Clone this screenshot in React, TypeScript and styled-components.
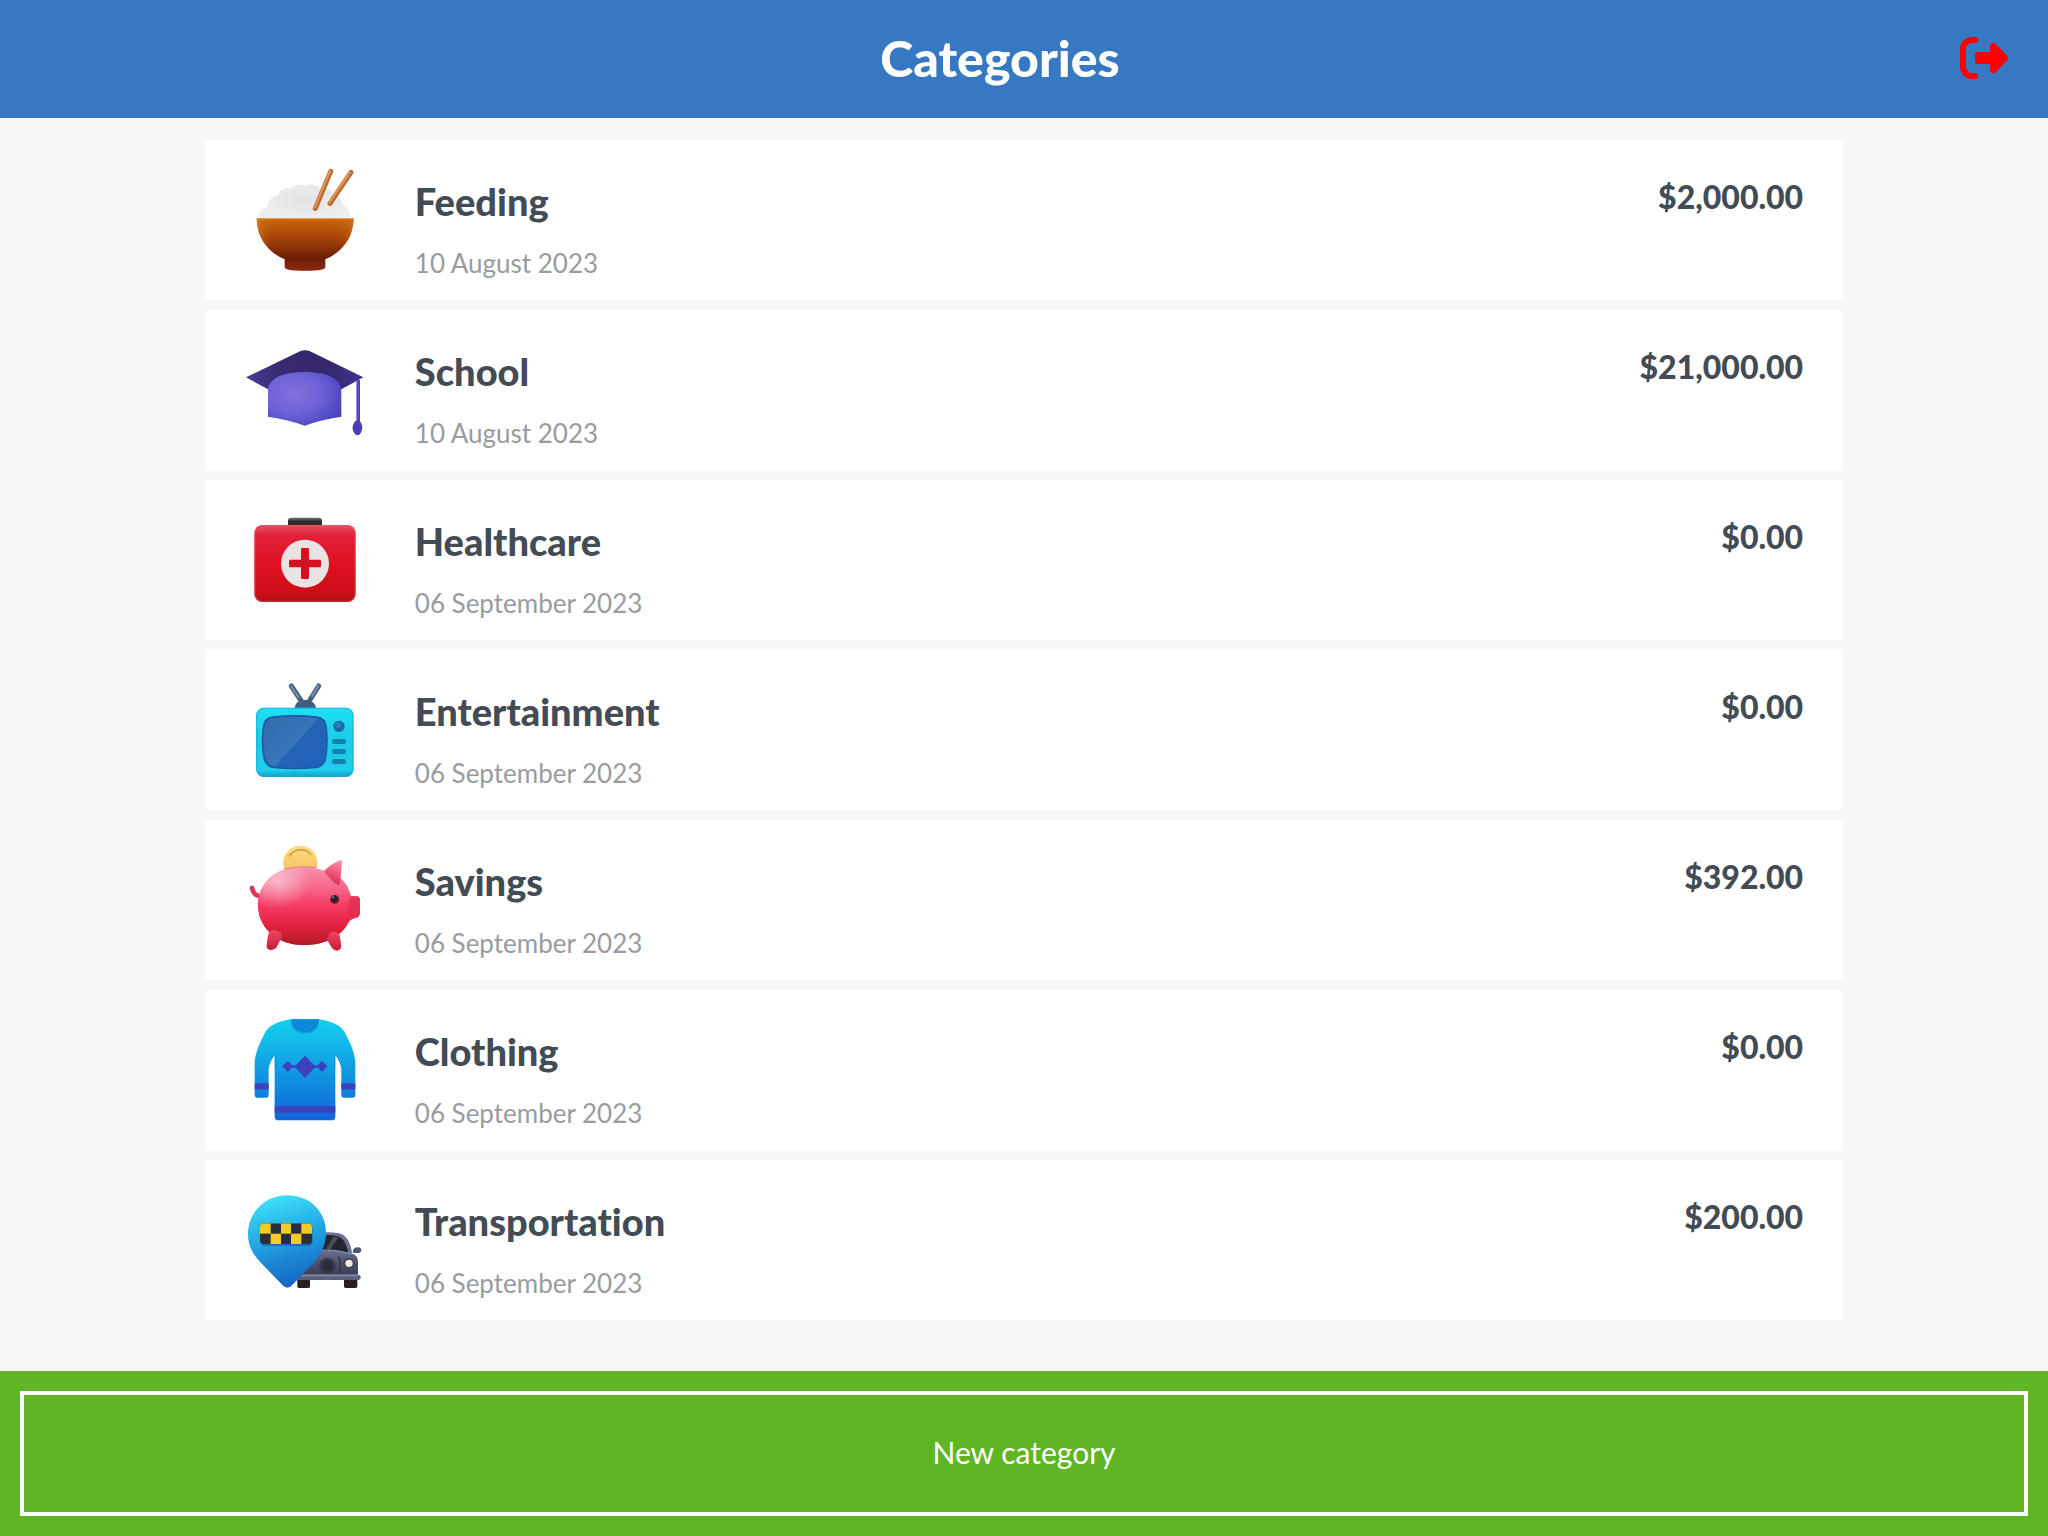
import React from "react";
import styled, { createGlobalStyle } from "styled-components";

const GlobalStyle = createGlobalStyle`
  *, *::before, *::after { box-sizing: border-box; }
  body {
    margin: 0;
    background: #f7f7f7;
    color: #434b54;
    font-family: Lato, "Open Sans", "Liberation Sans", sans-serif;
    font-variant-ligatures: none;
  }
`;

const Page = styled.div`
  display: flex;
  flex-direction: column;
  min-height: 100vh;
`;

const Header = styled.header`
  display: flex;
  align-items: center;
  padding: 29px 40px 31px;
  background: #3778c2;
`;

const Title = styled.h1`
  flex: 1;
  margin: 0;
  color: #fff;
  font-size: 50px;
  font-weight: 900;
  line-height: 58px;
  text-align: center;
`;

const LogoutButton = styled.button`
  display: flex;
  padding: 0;
  border: 0;
  background: none;
  color: #f00;
  cursor: pointer;
`;

const List = styled.ul`
  flex: 1;
  display: flex;
  flex-direction: column;
  gap: 10px;
  width: 80%;
  margin: 0 auto;
  padding: 22px 0 40px;
  list-style: none;
`;

const Card = styled.li`
  display: flex;
  gap: 50px;
  padding: 20px 40px;
  background: #fff;
`;

const Picture = styled.svg`
  display: block;
  flex: none;
  width: 120px;
  height: 120px;
`;

const Details = styled.div`
  flex: 1;
  display: flex;
  flex-direction: column;
  gap: 23px;
  padding-top: 18px;
`;

const Name = styled.h2`
  margin: 0;
  font-size: 38px;
  font-weight: 900;
  line-height: 46px;
`;

const CreatedAt = styled.time`
  color: #999b9e;
  font-size: 26px;
  line-height: 32px;
`;

const Amount = styled.p`
  margin: 0;
  padding-top: 18px;
  font-size: 32px;
  font-weight: 900;
  line-height: 38px;
`;

const Footer = styled.footer`
  padding: 20px;
  background: #5fb523;
`;

const NewCategoryButton = styled.button`
  display: block;
  width: 100%;
  padding: 39px 40px 41px;
  border: 4px solid #fff;
  border-radius: 0;
  background: none;
  color: #fff;
  font-family: inherit;
  font-size: 30px;
  line-height: 37px;
  cursor: pointer;
`;

const LogoutIcon = () => (
  <svg width="48" height="44" viewBox="0 0 48 44" aria-hidden="true">
    <path
      d="M15 4H12a9 9 0 0 0-9 9v18a9 9 0 0 0 9 9h3"
      fill="none"
      stroke="currentColor"
      strokeWidth="6"
      strokeLinecap="round"
    />
    <path
      d="M18 16H30V10.500C30 7 33 5.500 35.500 7.800L47 19.500C48.300 21 48.300 23 47 24.500L35.500 36.200C33 38.500 30 37 30 33.500V28H18C16 28 15 27 15 25V19C15 17 16 16 18 16Z"
      fill="currentColor"
    />
  </svg>
);

const RiceBowl = () => (
  <Picture viewBox="135 90 360 360" aria-hidden="true">
    <defs>
      <linearGradient id="bowl" x1="0" y1="0" x2="0" y2="1">
        <stop offset="0" stopColor="#c8690f" />
        <stop offset=".35" stopColor="#a84608" />
        <stop offset=".78" stopColor="#6b1c08" />
        <stop offset="1" stopColor="#8e2a0d" />
      </linearGradient>
      <linearGradient id="bowlSide">
        <stop offset="0" stopColor="#f08a2a" stopOpacity=".5" />
        <stop offset=".15" stopColor="#c8690f" stopOpacity="0" />
        <stop offset=".85" stopColor="#c8690f" stopOpacity="0" />
        <stop offset="1" stopColor="#e07820" stopOpacity=".4" />
      </linearGradient>
      <radialGradient id="rice" cx=".5" cy=".45" r=".6">
        <stop offset="0" stopColor="#e3e3e6" />
        <stop offset="1" stopColor="#efeff0" />
      </radialGradient>
    </defs>
    <path
      d="M176 266C176 244 188 232 203 232C203 212 216 198 234 198C238 180 254 172 272 176C284 164 302 160 316 166C332 158 350 164 358 174C378 166 396 178 398 196C416 196 426 208 426 222C442 228 452 246 452 266Z"
      fill="url(#rice)"
    />
    <g strokeLinecap="round" strokeWidth="15">
      <path d="M392 124L346 235" stroke="#bd6a30" />
      <path d="M453 127L390 220" stroke="#bd6a30" />
      <path d="M390 123L344 233" stroke="#e0985a" strokeWidth="6" />
      <path d="M450 127L388 217" stroke="#e0985a" strokeWidth="6" />
    </g>
    <path
      d="M170 264H461C461 322 428 366 376 388V410C376 418 362 422 315 422C268 422 254 418 254 410V388C202 366 170 322 170 264Z"
      fill="url(#bowl)"
    />
    <path
      d="M170 264H461C461 322 428 366 376 388H254C202 366 170 322 170 264Z"
      fill="url(#bowlSide)"
    />
    <path d="M171 266H460" stroke="#e59a4c" strokeWidth="4" />
  </Picture>
);

const GraduationCap = () => (
  <Picture viewBox="135 60 360 360" aria-hidden="true">
    <defs>
      <radialGradient id="capBase" cx=".35" cy=".4" r=".75">
        <stop offset="0" stopColor="#8370da" />
        <stop offset=".5" stopColor="#6c62d8" />
        <stop offset="1" stopColor="#4740ba" />
      </radialGradient>
      <linearGradient id="capTop">
        <stop offset="0" stopColor="#4a3a96" />
        <stop offset=".3" stopColor="#382970" />
        <stop offset=".7" stopColor="#352769" />
        <stop offset="1" stopColor="#44339a" />
      </linearGradient>
    </defs>
    <path
      d="M138 202L300 124Q315 117 330 124L490 202L424 238H204Z"
      fill="url(#capTop)"
    />
    <path
      d="M204 240C206 205 250 186 314 186C378 186 422 205 424 240V320Q360 330 314 347Q268 330 204 320Z"
      fill="url(#capBase)"
    />
    <path d="M474 210V340" stroke="#5b4cc4" strokeWidth="10" />
    <path d="M478 210V340" stroke="#3d33a0" strokeWidth="3" />
    <path
      d="M467 332H479C488 344 490 358 480 372Q472 380 465 372C454 358 456 344 467 332Z"
      fill="#4a3fb6"
    />
  </Picture>
);

const FirstAidKit = () => (
  <Picture viewBox="135 60 360 360" aria-hidden="true">
    <defs>
      <linearGradient id="kit" x1="0" y1="0" x2="0" y2="1">
        <stop offset="0" stopColor="#ea5064" />
        <stop offset=".13" stopColor="#e3213a" />
        <stop offset=".55" stopColor="#dc1020" />
        <stop offset=".85" stopColor="#d00e18" />
        <stop offset="1" stopColor="#b01218" />
      </linearGradient>
      <linearGradient id="handle" x1="0" y1="0" x2="0" y2="1">
        <stop offset="0" stopColor="#747678" />
        <stop offset=".5" stopColor="#2c2c2e" />
        <stop offset="1" stopColor="#3e2628" />
      </linearGradient>
    </defs>
    <path d="M264 136V122Q264 113 274 113H356Q366 113 366 122V136Z" fill="url(#handle)" />
    <rect x="163" y="135" width="304" height="231" rx="24" fill="url(#kit)" />
    <rect x="165" y="137" width="300" height="227" rx="22" fill="none" stroke="#f0626c" strokeOpacity=".35" strokeWidth="4" />
    <circle cx="315" cy="251" r="72" fill="#e9e3e2" />
    <path
      d="M307 204H323Q327 204 327 208V239H359Q363 239 363 243V258Q363 262 359 262H327V293Q327 297 323 297H307Q303 297 303 293V262H271Q267 262 267 258V243Q267 239 271 239H303V208Q303 204 307 204Z"
      fill="#d4121f"
    />
  </Picture>
);

const Television = () => (
  <Picture viewBox="135 60 360 360" aria-hidden="true">
    <defs>
      <linearGradient id="tvBody" x1="0" y1="0" x2="0" y2="1">
        <stop offset="0" stopColor="#20dff2" />
        <stop offset=".5" stopColor="#1ccbe8" />
        <stop offset=".9" stopColor="#1fcdec" />
        <stop offset="1" stopColor="#169bc6" />
      </linearGradient>
      <linearGradient id="tvScreen" x1="0" y1="0" x2="1" y2="1">
        <stop offset="0" stopColor="#2c66a8" />
        <stop offset="1" stopColor="#1d62bd" />
      </linearGradient>
      <linearGradient id="tvGlare" x1="0" y1="0" x2="1" y2="1">
        <stop offset="0" stopColor="#4a86be" stopOpacity=".2" />
        <stop offset="1" stopColor="#6a9cca" stopOpacity=".5" />
      </linearGradient>
    </defs>
    <g strokeLinecap="round" strokeWidth="15" stroke="#47617f">
      <path d="M274 108L306 156" />
      <path d="M356 108L326 156" />
    </g>
    <g strokeLinecap="round" strokeWidth="5" stroke="#7d93ae">
      <path d="M273 108L296 142" />
      <path d="M355 108L336 138" />
    </g>
    <path d="M284 174C286 156 300 150 316 150C332 150 346 158 348 174Z" fill="#3f5c82" />
    <rect x="168" y="173" width="293" height="208" rx="24" fill="url(#tvBody)" />
    <rect x="170" y="175" width="289" height="204" rx="22" fill="none" stroke="#1aaed8" strokeOpacity=".6" strokeWidth="4" />
    <path
      d="M218 201Q284 193 350 201Q376 204 379 232Q384 276 378 320Q374 350 346 353Q284 358 222 353Q196 350 191 320Q184 276 190 232Q193 204 218 201Z"
      fill="url(#tvScreen)"
      stroke="#1b58a4"
      strokeWidth="4"
    />
    <path
      d="M220 205Q284 198 346 205L352 208L226 348Q202 346 196 320Q188 276 194 234Q198 208 220 205Z"
      fill="url(#tvGlare)"
    />
    <circle cx="417" cy="229" r="17" fill="#1b6a9e" />
    <circle cx="414" cy="225" r="9" fill="#2a83b4" />
    <g fill="#1681ab">
      <rect x="396" y="267" width="42" height="15" rx="7" />
      <rect x="396" y="297" width="42" height="15" rx="7" />
      <rect x="396" y="327" width="42" height="15" rx="7" />
    </g>
  </Picture>
);

const PiggyBank = () => (
  <Picture viewBox="135 60 360 360" aria-hidden="true">
    <defs>
      <linearGradient id="pig" x1="0" y1="0" x2="0" y2="1">
        <stop offset="0" stopColor="#f990aa" />
        <stop offset=".22" stopColor="#f76f92" />
        <stop offset=".5" stopColor="#f43a62" />
        <stop offset=".75" stopColor="#e3213f" />
        <stop offset="1" stopColor="#b01a28" />
      </linearGradient>
      <radialGradient id="pigShine" cx=".22" cy=".18" r=".35">
        <stop offset="0" stopColor="#fff" stopOpacity=".5" />
        <stop offset="1" stopColor="#fff" stopOpacity="0" />
      </radialGradient>
      <linearGradient id="pigLeg" x1="0" y1="0" x2="0" y2="1">
        <stop offset="0" stopColor="#ee4663" />
        <stop offset="1" stopColor="#c3203a" />
      </linearGradient>
      <linearGradient id="pigEar" x1=".7" y1="0" x2=".4" y2="1">
        <stop offset="0" stopColor="#f890a6" />
        <stop offset=".5" stopColor="#f0567a" />
        <stop offset="1" stopColor="#d42c50" />
      </linearGradient>
      <linearGradient id="coin" x1="0" y1="0" x2="0" y2="1">
        <stop offset="0" stopColor="#fbdc7c" />
        <stop offset="1" stopColor="#f5bc5c" />
      </linearGradient>
    </defs>
    <circle cx="301" cy="128" r="51" fill="url(#coin)" />
    <path d="M268 108Q282 89 304 89Q322 90 332 104" fill="none" stroke="#c4913e" strokeWidth="4" strokeLinecap="round" />
    <path d="M156 204C160 220 166 228 180 228" fill="none" stroke="#dc3455" strokeWidth="14" strokeLinecap="round" />
    <path
      id="pigBody"
      d="M174 254C174 194 224 143 290 143C330 141 356 146 380 156L425 178C440 194 448 210 452 228H468Q480 228 480 242V276Q480 292 466 294C456 296 450 300 446 306C424 350 376 375 312 375C228 375 174 320 174 254Z"
      fill="url(#pig)"
    />
    <use href="#pigBody" style={{ fill: "none" }} />
    <path
      d="M174 254C174 194 224 143 290 143C330 141 356 146 380 156L425 178L446 306C424 350 376 375 312 375C228 375 174 320 174 254Z"
      fill="url(#pigShine)"
    />
    <path d="M254 147Q300 137 350 143" fill="none" stroke="#ec8094" strokeWidth="4" />
    <path d="M450 230H468Q480 230 480 242V276Q480 290 464 294Q450 297 448 290C444 274 444 250 450 230Z" fill="#e02f4f" fillOpacity=".8" />
    <path d="M372 154Q392 132 420 121Q427 121 426 130L420 190Q419 198 412 194Q396 186 372 154Z" fill="url(#pigEar)" />
    <path d="M204 346Q208 330 224 331Q246 334 246 350L230 382Q222 392 208 389Q198 386 200 374Z" fill="url(#pigLeg)" />
    <path d="M384 350Q388 334 404 335Q420 338 420 352L424 378Q422 392 410 392Q400 390 396 384L380 358Z" fill="url(#pigLeg)" />
    <circle cx="404" cy="238" r="13" fill="#5c1a2c" />
    <circle cx="403" cy="236" r="9" fill="#20222a" />
    <circle cx="399" cy="232" r="3" fill="#8a8f98" />
  </Picture>
);

const Sweater = () => (
  <Picture viewBox="135 60 360 360" aria-hidden="true">
    <defs>
      <linearGradient id="sweater" x1="0" y1="88" x2="0" y2="392" gradientUnits="userSpaceOnUse">
        <stop offset="0" stopColor="#12d0ee" />
        <stop offset=".3" stopColor="#12b2e8" />
        <stop offset=".65" stopColor="#0f8ade" />
        <stop offset="1" stopColor="#1262d8" />
      </linearGradient>
    </defs>
    <path
      d="M274 88H356C392 92 424 108 434 126C450 158 462 182 466 212V314Q466 323 458 323H432Q424 323 424 314V238Q422 218 406 196V380Q406 391 394 391H236Q224 391 224 380V196Q208 218 206 238V314Q206 323 198 323H172Q164 323 164 314V212C168 182 180 158 196 126C206 108 238 92 274 88Z"
      fill="url(#sweater)"
    />
    <path d="M226 196V236M404 196V236" stroke="#0a74d2" strokeWidth="4" strokeOpacity=".4" />
    <path d="M274 88H356V98C352 118 336 128 315 128C294 128 278 118 274 98Z" fill="#0f86d8" />
    <path d="M274 92C276 118 294 128 315 128C336 128 354 118 356 92" fill="none" stroke="#0a9fe0" strokeWidth="4" />
    <g fill="#3c42bd">
      <rect x="164" y="280" width="42" height="18" />
      <rect x="424" y="280" width="42" height="18" />
      <rect x="224" y="349" width="182" height="19" />
      <path d="M315 197L347 230L315 264L283 230Z" />
      <path d="M263 213L280 229L263 246L247 229Z" />
      <path d="M366 213L382 229L366 246L350 229Z" />
      <path d="M276 226H354V233H276Z" />
    </g>
  </Picture>
);

const Taxi = () => (
  <Picture viewBox="135 60 360 360" aria-hidden="true">
    <defs>
      <linearGradient id="pin" x1=".3" y1="0" x2=".55" y2="1">
        <stop offset="0" stopColor="#3fe4fa" />
        <stop offset=".35" stopColor="#28b4e8" />
        <stop offset=".7" stopColor="#1b86d4" />
        <stop offset="1" stopColor="#1565c0" />
      </linearGradient>
      <linearGradient id="car" x1="0" y1="0" x2="0" y2="1">
        <stop offset="0" stopColor="#6c7090" />
        <stop offset=".5" stopColor="#4e5270" />
        <stop offset="1" stopColor="#3c3e56" />
      </linearGradient>
      <clipPath id="plate">
        <rect x="180" y="190" width="156" height="62" rx="12" />
      </clipPath>
    </defs>
    <g fill="#262026">
      <rect x="292" y="350" width="38" height="34" rx="5" />
      <rect x="432" y="350" width="40" height="34" rx="5" />
    </g>
    <path d="M350 220Q384 214 418 220C440 226 452 248 456 280H340Z" fill="#6d7192" />
    <path d="M360 228Q386 222 412 228C430 234 440 252 444 276H350Z" fill="#24262e" />
    <path d="M380 264L400 230L416 232L386 274Z" fill="#4a5058" />
    <path d="M458 278Q458 262 474 262Q484 262 484 272Q482 280 468 279Z" fill="#50557a" />
    <path d="M300 300C320 280 350 272 390 272Q400 268 452 280Q474 284 474 306V344H300Z" fill="url(#car)" />
    <path d="M330 276Q390 262 452 282" fill="none" stroke="#8287a6" strokeWidth="4" />
    <circle cx="382" cy="318" r="24" fill="#34364a" />
    <circle cx="382" cy="318" r="16" fill="#2b2d3c" />
    <path d="M416 290Q424 314 418 342" fill="none" stroke="#34374c" strokeWidth="5" />
    <circle cx="446" cy="310" r="16" fill="#40435c" />
    <circle cx="447" cy="310" r="11" fill="#efecd2" />
    <rect x="290" y="344" width="192" height="16" rx="8" fill="#5b5f7e" />
    <path d="M298 347H474" stroke="#8489a6" strokeWidth="4" />
    <path
      d="M262 106C330 106 378 156 378 218C378 256 362 286 336 314L276 376Q262 390 248 376L184 310C158 282 144 258 144 222C144 156 196 106 262 106Z"
      fill="url(#pin)"
    />
    <rect x="182" y="194" width="156" height="64" rx="12" fill="#145a96" fillOpacity=".6" />
    <g clipPath="url(#plate)">
      <rect x="180" y="190" width="156" height="62" fill="#292e3a" />
      <g fill="#f2cc22">
        <rect x="180" y="190" width="32" height="31" />
        <rect x="243" y="190" width="30" height="31" />
        <rect x="304" y="190" width="32" height="31" />
        <rect x="212" y="221" width="31" height="31" />
        <rect x="273" y="221" width="31" height="31" />
      </g>
    </g>
  </Picture>
);

const categories = [
  { name: "Feeding", date: "10 August 2023", iso: "2023-08-10", amount: "$2,000.00", Icon: RiceBowl },
  { name: "School", date: "10 August 2023", iso: "2023-08-10", amount: "$21,000.00", Icon: GraduationCap },
  { name: "Healthcare", date: "06 September 2023", iso: "2023-09-06", amount: "$0.00", Icon: FirstAidKit },
  { name: "Entertainment", date: "06 September 2023", iso: "2023-09-06", amount: "$0.00", Icon: Television },
  { name: "Savings", date: "06 September 2023", iso: "2023-09-06", amount: "$392.00", Icon: PiggyBank },
  { name: "Clothing", date: "06 September 2023", iso: "2023-09-06", amount: "$0.00", Icon: Sweater },
  { name: "Transportation", date: "06 September 2023", iso: "2023-09-06", amount: "$200.00", Icon: Taxi },
];

export default function App() {
  return (
    <Page>
      <GlobalStyle />
      <Header>
        <Title>Categories</Title>
        <LogoutButton type="button" aria-label="Log out">
          <LogoutIcon />
        </LogoutButton>
      </Header>
      <List>
        {categories.map(({ name, date, iso, amount, Icon }) => (
          <Card key={name}>
            <Icon />
            <Details>
              <Name>{name}</Name>
              <CreatedAt dateTime={iso}>{date}</CreatedAt>
            </Details>
            <Amount>{amount}</Amount>
          </Card>
        ))}
      </List>
      <Footer>
        <NewCategoryButton type="button">New category</NewCategoryButton>
      </Footer>
    </Page>
  );
}
